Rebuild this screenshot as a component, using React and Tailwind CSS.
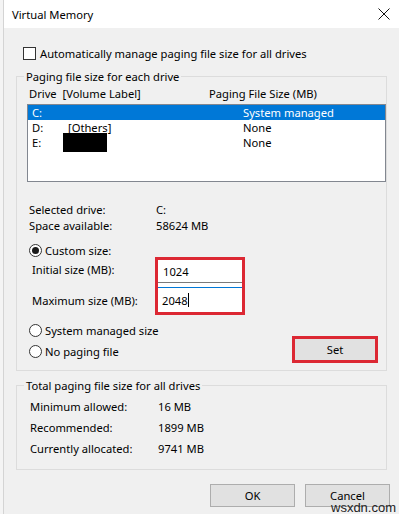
import React from 'react';

const Radio = ({ checked }) => (
  <span className="w-[13px] h-[13px] rounded-full border border-[#333] bg-white flex items-center justify-center shrink-0">
    {checked && <span className="w-[7px] h-[7px] rounded-full bg-[#1a1a1a]" />}
  </span>
);

const drives = [
  { drive: 'C:', label: '', size: 'System managed', selected: true },
  { drive: 'D:', label: '[Others]', size: 'None' },
  { drive: 'E:', label: '', size: 'None', redacted: true },
];

const totals = [
  ['Minimum allowed:', '16 MB'],
  ['Recommended:', '1899 MB'],
  ['Currently allocated:', '9741 MB'],
];

export default function App() {
  return (
    <div className="w-[399px] h-[514px] bg-[#f0f0f0] flex relative overflow-hidden text-[11.2px] leading-[15px] text-black font-['Noto_Sans',sans-serif]">
      <div className="w-[4px] bg-[#f4f4f4] border-r border-[#d4d4d4] shrink-0" />
      <div className="flex-1 flex flex-col">
        {/* title bar */}
        <div className="h-[28px] bg-white flex items-center justify-between pl-[8px] pr-[10px] shrink-0">
          <span>Virtual Memory</span>
          <svg width="12" height="12" viewBox="0 0 12 12" className="mr-[1px]">
            <path d="M0.5 0.5 L11.5 11.5 M11.5 0.5 L0.5 11.5" stroke="#111" strokeWidth="1" fill="none" />
          </svg>
        </div>

        {/* auto manage */}
        <div className="flex items-center gap-[4px] ml-[19px] mt-[18px]">
          <span className="w-[13px] h-[13px] border border-[#333] bg-white shrink-0" />
          <span>Automatically manage paging file size for all drives</span>
        </div>

        {/* group 1 */}
        <fieldset className="border border-[#dcdcdc] ml-[12px] mr-[14px] mt-[8px] pb-[7px]">
          <legend className="ml-[7px] px-[2px]">Paging file size for each drive</legend>
          <div className="flex mt-[2px] pl-[12px]">
            <span className="w-[180px]">Drive&nbsp;&nbsp;[Volume Label]</span>
            <span>Paging File Size (MB)</span>
          </div>
          <div className="ml-[10px] w-[359px] h-[78px] mt-[3px] border border-[#828790] bg-white">
            {drives.map((d) => (
              <div
                key={d.drive}
                className={`h-[15px] leading-[14px] flex items-center relative ${d.selected ? 'bg-[#0078d7] text-white' : ''}`}
              >
                <span className="pl-[4px] w-[40px]">{d.drive}</span>
                <span className="w-[175px]">{d.label}</span>
                <span>{d.size}</span>
                {d.redacted && <span className="absolute left-[35px] top-[-2px] w-[44px] h-[19px] bg-black" />}
              </div>
            ))}
          </div>

          <div className="mt-[19px] pl-[12px]">
            <div className="flex h-[16px] items-center">
              <span className="w-[127px]">Selected drive:</span>
              <span>C:</span>
            </div>
            <div className="flex h-[16px] items-center">
              <span className="w-[127px]">Space available:</span>
              <span>58624 MB</span>
            </div>
          </div>

          <div className="flex items-center gap-[3px] pl-[12px] mt-[10px] h-[15px]">
            <Radio checked />
            <span>Custom size:</span>
          </div>

          <div className="flex">
            <div className="w-[138px] pl-[15px]">
              <div className="mt-[4px]">Initial size (MB):</div>
              <div className="mt-[16px]">Maximum size (MB):</div>
            </div>
            <div className="w-[90px] h-[58px] -mt-[1px] border-[3px] border-[#dc2833] bg-white flex flex-col">
              <div className="h-[23px] border-b border-[#7a7a7a] pl-[5px] flex items-center">1024</div>
              <div className="h-[4px]" />
              <div className="flex-1 border-t border-[#0078d7] pl-[4px] flex items-center">
                2048<span className="w-[1px] h-[14px] bg-black" />
              </div>
            </div>
          </div>

          <div className="flex mt-[7px] pl-[12px]">
            <div className="flex flex-col gap-[5px]">
              <div className="flex items-center gap-[3px] h-[16px]">
                <Radio />
                <span>System managed size</span>
              </div>
              <div className="flex items-center gap-[3px] h-[16px]">
                <Radio />
                <span>No paging file</span>
              </div>
            </div>
            <div className="ml-auto mr-[8px] mt-[14px] w-[86px] h-[27px] border-[3px] border-[#dc2833] bg-[#e1e1e1] flex items-center justify-center">
              Set
            </div>
          </div>
        </fieldset>

        {/* group 2 */}
        <fieldset className="border border-[#dcdcdc] ml-[12px] mr-[14px] mt-[7px] pb-[10px]">
          <legend className="ml-[7px] px-[2px]">Total paging file size for all drives</legend>
          <div className="mt-[3px] pl-[13px]">
            {totals.map(([k, v]) => (
              <div key={k} className="flex h-[21px] items-center">
                <span className="w-[128px]">{k}</span>
                <span>{v}</span>
              </div>
            ))}
          </div>
        </fieldset>

        {/* buttons */}
        <div className="flex justify-end gap-[10px] mt-[14px] pr-[11px]">
          <div className="w-[85px] h-[23px] bg-[#e1e1e1] border border-[#adadad] flex items-center justify-center">OK</div>
          <div className="w-[85px] h-[23px] bg-[#e1e1e1] border border-[#adadad] flex items-center justify-center">Cancel</div>
        </div>
      </div>
      <span className="absolute left-[331px] top-[501px] text-[13px] leading-[13px] text-[#222] font-['Liberation_Sans',sans-serif]">wsxdn.com</span>
    </div>
  );
}
